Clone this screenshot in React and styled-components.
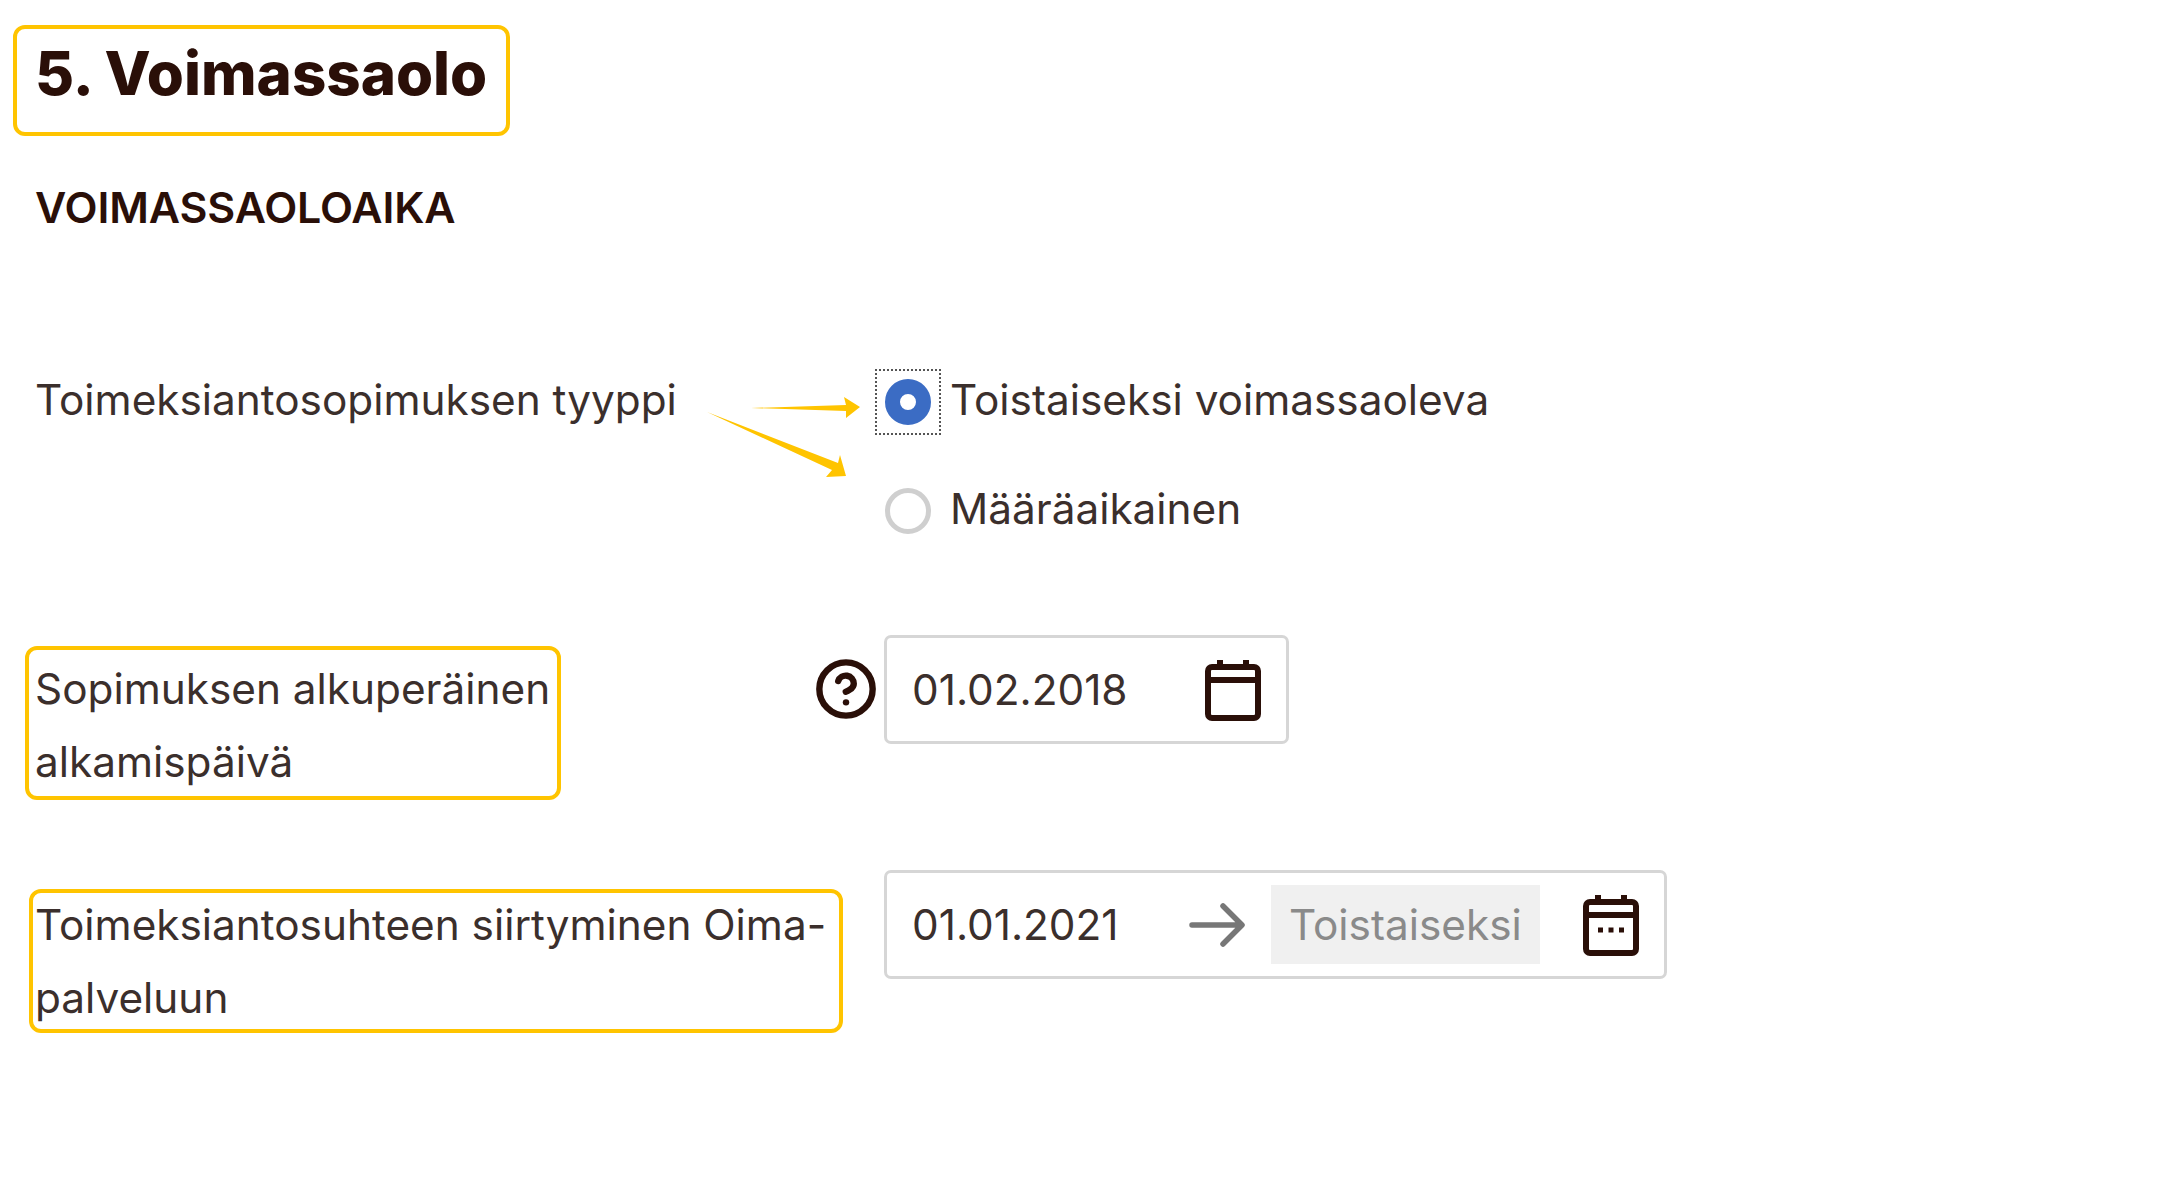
import * as React from "react"
import styled, { createGlobalStyle } from "styled-components"
import { CircleHelp } from "lucide-react"

const Global = createGlobalStyle`
  body {
    margin: 0;
    background: #fff;
    color: #3b2f2c;
    font-family: Inter, "Noto Sans", sans-serif;
  }
`;

const Page = styled.main`
  position: relative;
  width: 2161px;
  height: 1180px;
  box-sizing: border-box;
  padding: 25px 0 0 35px;
  overflow: hidden;
`;

const TitleBox = styled.div`
  box-sizing: border-box;
  width: 497px;
  height: 111px;
  margin-left: -22px;
  padding: 12px 0 0 18px;
  border: 4px solid #ffc400;
  border-radius: 12px;
`;

const Title = styled.h1`
  margin: 0;
  font-size: 60px;
  line-height: 64px;
  font-weight: 800;
  color: #2a0f08;
`;

const SectionTitle = styled.h2`
  margin: 51px 0 0;
  font-size: 43px;
  line-height: 40px;
  font-weight: 600;
  letter-spacing: -0.003em;
  color: #2a0f08;
`;

const Row = styled.div`
  display: grid;
  grid-template-columns: 849px 1fr;
  margin-top: ${(p) => p.$gap}px;
`;

const LabelCell = styled.div`
  display: flex;
  justify-content: space-between;
  padding-right: 6px;
`;

const Label = styled.div`
  position: relative;
  max-width: ${(p) => p.$maxWidth || 800}px;
  margin-top: ${(p) => p.$top}px;
  font-size: 42.3px;
  line-height: 73px;
`;

const Annotation = styled.span`
  position: absolute;
  top: ${(p) => p.$top}px;
  left: ${(p) => p.$left}px;
  width: ${(p) => p.$width}px;
  height: ${(p) => p.$height}px;
  box-sizing: border-box;
  border: 4px solid #ffc400;
  border-radius: 12px;
`;

const RadioGroup = styled.div`
  display: flex;
  flex-direction: column;
  gap: 43px;
`;

const RadioOption = styled.label`
  display: flex;
  align-items: center;
  gap: 9px;
  height: 66px;
  font-size: 42.3px;
  margin-left: -9px;
`;

const RadioFrame = styled.span`
  box-sizing: border-box;
  display: flex;
  align-items: center;
  justify-content: center;
  flex: none;
  width: 66px;
  height: 66px;
  margin-top: 5px;
  border: 2px ${(p) => (p.$focused ? "dotted #555" : "solid transparent")};
`;

const RadioDot = styled.span`
  box-sizing: border-box;
  width: 46px;
  height: 46px;
  border-radius: 50%;
  border: ${(p) => (p.$checked ? "15px solid #3b6cc4" : "5px solid #cfcfcf")};
  background: #fff;
`;

const DateField = styled.div`
  box-sizing: border-box;
  display: flex;
  align-items: center;
  width: ${(p) => p.$width}px;
  height: 109px;
  padding: 0 25px;
  border: 3px solid #d6d6d6;
  border-radius: 7px;
  font-size: 42.3px;
`;

const DateValue = styled.span`
  width: ${(p) => p.$width}px;
`;

const Placeholder = styled.span`
  display: flex;
  align-items: center;
  width: 269px;
  height: 79px;
  margin-left: 26px;
  padding-left: 18px;
  box-sizing: border-box;
  background: #f0f0f0;
  color: #8a8a8a;
`;

const CalendarSlot = styled.span`
  display: flex;
  margin-left: auto;
`;

const Help = styled(CircleHelp)`
  margin-top: 22px;
  color: #2a0f08;
`;

const ArrowOverlay = styled.svg`
  position: absolute;
  top: 0;
  left: 0;
  pointer-events: none;
`;

const CalendarIcon = ({ dots }) => (
  <svg width="56" height="62" viewBox="0 0 56 62" fill="none" stroke="#2a0f08" strokeWidth="6">
    <rect x="3" y="8" width="50" height="51" rx="4" />
    <path d="M3 21h50M15 1v9M41 1v9" />
    {dots && <path d="M15 36h5M25.500 36h5M36 36h5" strokeWidth="5" />}
  </svg>
);

const ArrowIcon = () => (
  <svg width="56" height="44" viewBox="0 0 56 44" fill="none" stroke="#777" strokeWidth="5.500" strokeLinecap="round" strokeLinejoin="round">
    <path d="M3 22h49M34 3l19 19-19 19" />
  </svg>
);

export default function App() {
  return (
    <Page>
      <Global />
      <TitleBox>
        <Title>5. Voimassaolo</Title>
      </TitleBox>
      <SectionTitle>VOIMASSAOLOAIKA</SectionTitle>

      <Row $gap={139}>
        <LabelCell>
          <Label $top={-3}>Toimeksiantosopimuksen tyyppi</Label>
        </LabelCell>
        <RadioGroup>
          <RadioOption>
            <RadioFrame $focused>
              <RadioDot $checked />
            </RadioFrame>
            Toistaiseksi voimassaoleva
          </RadioOption>
          <RadioOption>
            <RadioFrame>
              <RadioDot />
            </RadioFrame>
            Määräaikainen
          </RadioOption>
        </RadioGroup>
      </Row>

      <Row $gap={94}>
        <LabelCell>
          <Label $top={17} $maxWidth={600}>
            Sopimuksen alkuperäinen alkamispäivä
            <Annotation $top={-6} $left={-10} $width={536} $height={154} />
          </Label>
          <Help size={64} strokeWidth={2.4} />
        </LabelCell>
        <DateField $width={405}>
          <DateValue>01.02.2018</DateValue>
          <CalendarSlot>
            <CalendarIcon />
          </CalendarSlot>
        </DateField>
      </Row>

      <Row $gap={72}>
        <LabelCell>
          <Label $top={18} $maxWidth={815}>
            Toimeksiantosuhteen siirtyminen Oima-palveluun
            <Annotation $top={1} $left={-6} $width={814} $height={144} />
          </Label>
        </LabelCell>
        <DateField $width={783}>
          <DateValue $width={277}>01.01.2021</DateValue>
          <ArrowIcon />
          <Placeholder>Toistaiseksi</Placeholder>
          <CalendarSlot>
            <CalendarIcon dots />
          </CalendarSlot>
        </DateField>
      </Row>

      <ArrowOverlay width="2161" height="1180">
        <polygon points="751,408 846,405 844,397 860,407 846,418 846,411" fill="#ffc400" />
        <polygon points="707,412 838,463 840,455 846,476 826,477 832,470" fill="#ffc400" />
      </ArrowOverlay>
    </Page>
  );
}
